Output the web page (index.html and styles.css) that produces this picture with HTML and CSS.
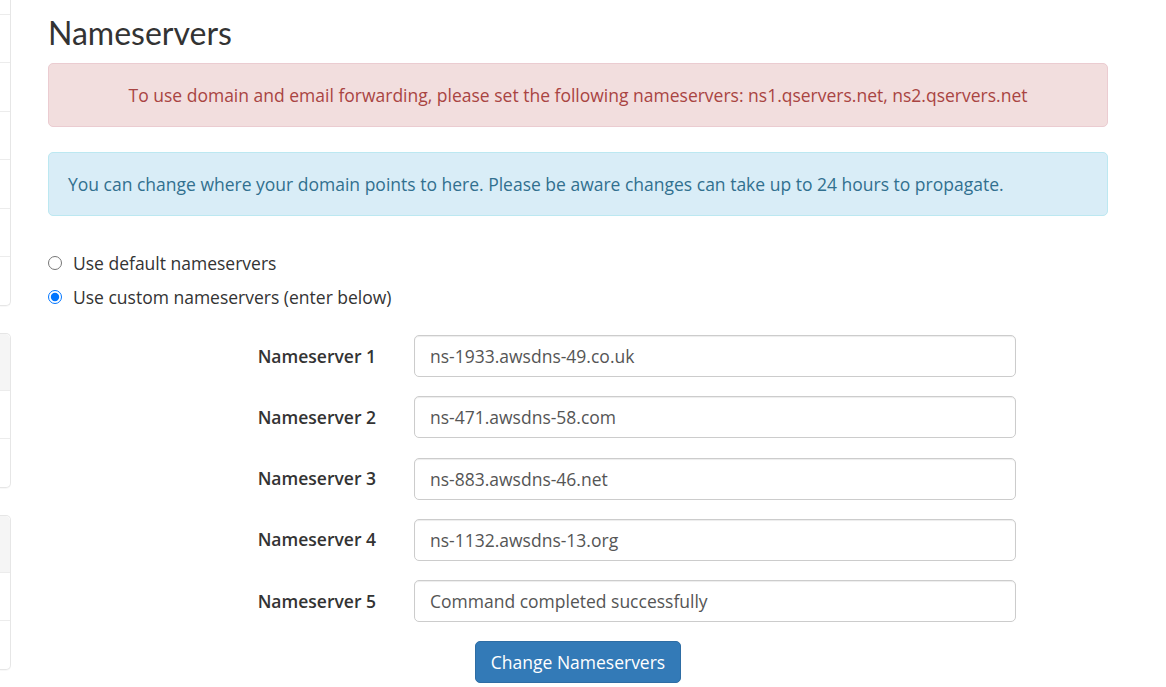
FILE: index.html
```html
<!DOCTYPE html>
<html>
<head>
<meta charset="utf-8">
<title>Nameservers</title>
<link rel="stylesheet" href="styles.css">
</head>
<body>
<div class="page">
  <aside class="sidebar">
    <div class="panel panel-first">
      <div class="row"></div>
      <div class="row"></div>
      <div class="row"></div>
      <div class="row"></div>
      <div class="row"></div>
      <div class="row"></div>
      <div class="row"></div>
    </div>
    <div class="panel">
      <div class="panel-head"></div>
      <div class="row"></div>
      <div class="row"></div>
    </div>
    <div class="panel">
      <div class="panel-head"></div>
      <div class="row"></div>
      <div class="row"></div>
    </div>
  </aside>
  <main class="main">
    <h2 class="title">Nameservers</h2>
    <div class="alert alert-danger">To use domain and email forwarding, please set the following nameservers: ns1.qservers.net, ns2.qservers.net</div>
    <div class="alert alert-info">You can change where your domain points to here. Please be aware changes can take up to 24 hours to propagate.</div>
    <div class="radios">
      <label class="radio"><input type="radio" name="ns"> Use default nameservers</label>
      <label class="radio"><input type="radio" name="ns" checked> Use custom nameservers (enter below)</label>
    </div>
    <form class="ns-form">
      <label class="ns-label">Nameserver 1</label>
      <input class="ns-input" type="text" value="ns-1933.awsdns-49.co.uk">
      <label class="ns-label">Nameserver 2</label>
      <input class="ns-input" type="text" value="ns-471.awsdns-58.com">
      <label class="ns-label">Nameserver 3</label>
      <input class="ns-input" type="text" value="ns-883.awsdns-46.net">
      <label class="ns-label">Nameserver 4</label>
      <input class="ns-input" type="text" value="ns-1132.awsdns-13.org">
      <label class="ns-label">Nameserver 5</label>
      <input class="ns-input" type="text" value="Command completed successfully">
    </form>
    <div class="actions">
      <button class="btn-primary" type="button">Change Nameservers</button>
    </div>
  </main>
</div>
</body>
</html>
```

FILE: styles.css
```css
html, body {
  margin: 0;
  padding: 0;
  background: #fff;
  overflow: hidden;
}
body {
  font-family: "Open Sans", "Liberation Sans", sans-serif;
  font-size: 17.5px;
  color: #333;
  line-height: 1.42857;
}
.page {
  display: flex;
  align-items: flex-start;
}
.sidebar {
  width: 11px;
  flex-shrink: 0;
}
.panel {
  width: 10px;
  border: 1px solid #e6e6e6;
  border-left: none;
  border-radius: 0 5px 5px 0;
  margin-bottom: 27px;
  background: #fff;
  box-shadow: 0 1px 1px rgba(0,0,0,0.03);
}
.panel-first {
  margin-top: -34px;
  border-top: none;
}
.panel .row {
  height: 47.5px;
  border-top: 1px solid #ececec;
}
.panel-first .row:first-child {
  border-top: none;
}
.panel-head {
  height: 56px;
  background: #f5f5f5;
  border-radius: 0 5px 0 0;
}
.main {
  width: 1060px;
  margin-left: 37px;
}
.title {
  font-family: "Lato", "Open Sans", sans-serif;
  font-weight: 400;
  font-size: 32px;
  line-height: 34px;
  color: #333;
  margin: 16px 0 13px;
}
.alert {
  border: 1px solid transparent;
  border-radius: 5px;
  padding: 19px 19px;
  line-height: 24px;
}
.alert-danger {
  background: #f2dede;
  border-color: #ebccd1;
  color: #a94442;
  text-align: center;
  margin-bottom: 25px;
}
.alert-info {
  background: #d9edf7;
  border-color: #bce8f1;
  color: #31708f;
  margin-bottom: 35px;
}
.radios {
  display: flex;
  flex-direction: column;
  gap: 10px;
}
.radio {
  display: flex;
  align-items: center;
  gap: 11px;
  height: 24px;
}
.radio input {
  width: 14px;
  height: 14px;
  margin: 0;
}
.ns-form {
  display: grid;
  grid-template-columns: 328px 602px;
  column-gap: 38px;
  row-gap: 19.3px;
  margin-top: 26px;
}
.ns-label {
  font-weight: 600;
  text-align: right;
  align-self: center;
}
.ns-input {
  height: 42px;
  box-sizing: border-box;
  border: 1px solid #ccc;
  border-radius: 5px;
  padding: 0 15px;
  font-family: "Open Sans", "Liberation Sans", sans-serif;
  font-size: 17.5px;
  color: #555;
  box-shadow: inset 0 1px 1px rgba(0,0,0,0.075);
  margin: 0;
}
.actions {
  display: flex;
  justify-content: center;
  margin-top: 19px;
}
.btn-primary {
  height: 42px;
  padding: 0 15px;
  background: #337ab7;
  border: 1px solid #2e6da4;
  border-radius: 5px;
  color: #fff;
  font-family: "Open Sans", "Liberation Sans", sans-serif;
  font-size: 17.5px;
}
```
